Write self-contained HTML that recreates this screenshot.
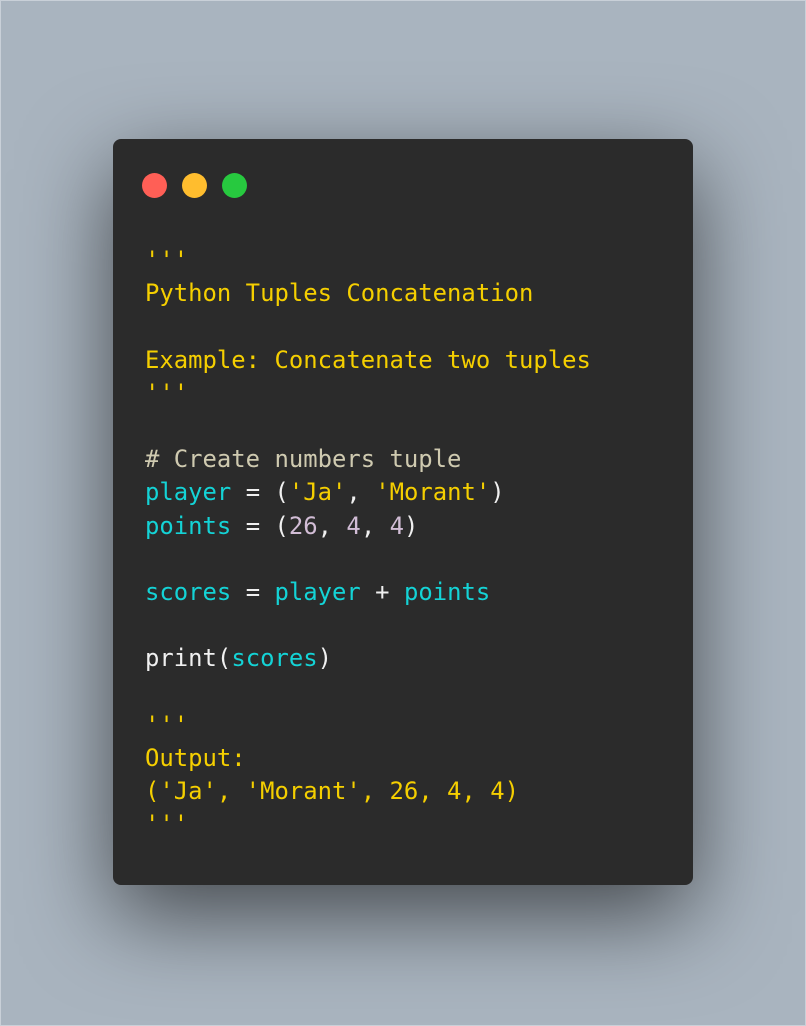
<!DOCTYPE html>
<html><head><style>
html,body{margin:0;padding:0}
body{width:806px;height:1026px;background:#a9b4bf;position:relative;overflow:hidden}
.frame{position:absolute;left:0;top:0;width:804px;height:1024px;border:1px solid #c9d0d8}
.win{position:absolute;left:113px;top:139px;width:580px;height:746px;background:#2b2b2b;border-radius:8px;box-shadow:0 30px 90px rgba(0,0,0,0.6)}
.dot{position:absolute;top:173px;width:25px;height:25px;border-radius:50%}
pre{position:absolute;left:145px;top:244px;margin:0;font-family:"DejaVu Sans Mono","Liberation Mono",monospace;font-size:23.9px;line-height:33.2px;color:#f0f0f0}
.y{color:#f5cf00}.c{color:#14d3d6}.m{color:#cfcab0}.n{color:#d2bdd6}
</style></head><body>
<div class="frame"></div>
<div class="win"></div>
<div class="dot" style="left:142px;background:#ff5f56"></div>
<div class="dot" style="left:182px;background:#ffbd2e"></div>
<div class="dot" style="left:222px;background:#27c93f"></div>
<pre><span class="y">'''
Python Tuples Concatenation

Example: Concatenate two tuples
'''</span>

<span class="m"># Create numbers tuple</span>
<span class="c">player</span> = (<span class="y">'Ja'</span>, <span class="y">'Morant'</span>)
<span class="c">points</span> = (<span class="n">26</span>, <span class="n">4</span>, <span class="n">4</span>)

<span class="c">scores</span> = <span class="c">player</span> + <span class="c">points</span>

print(<span class="c">scores</span>)

<span class="y">'''
Output:
('Ja', 'Morant', 26, 4, 4)
'''</span></pre>
</body></html>
